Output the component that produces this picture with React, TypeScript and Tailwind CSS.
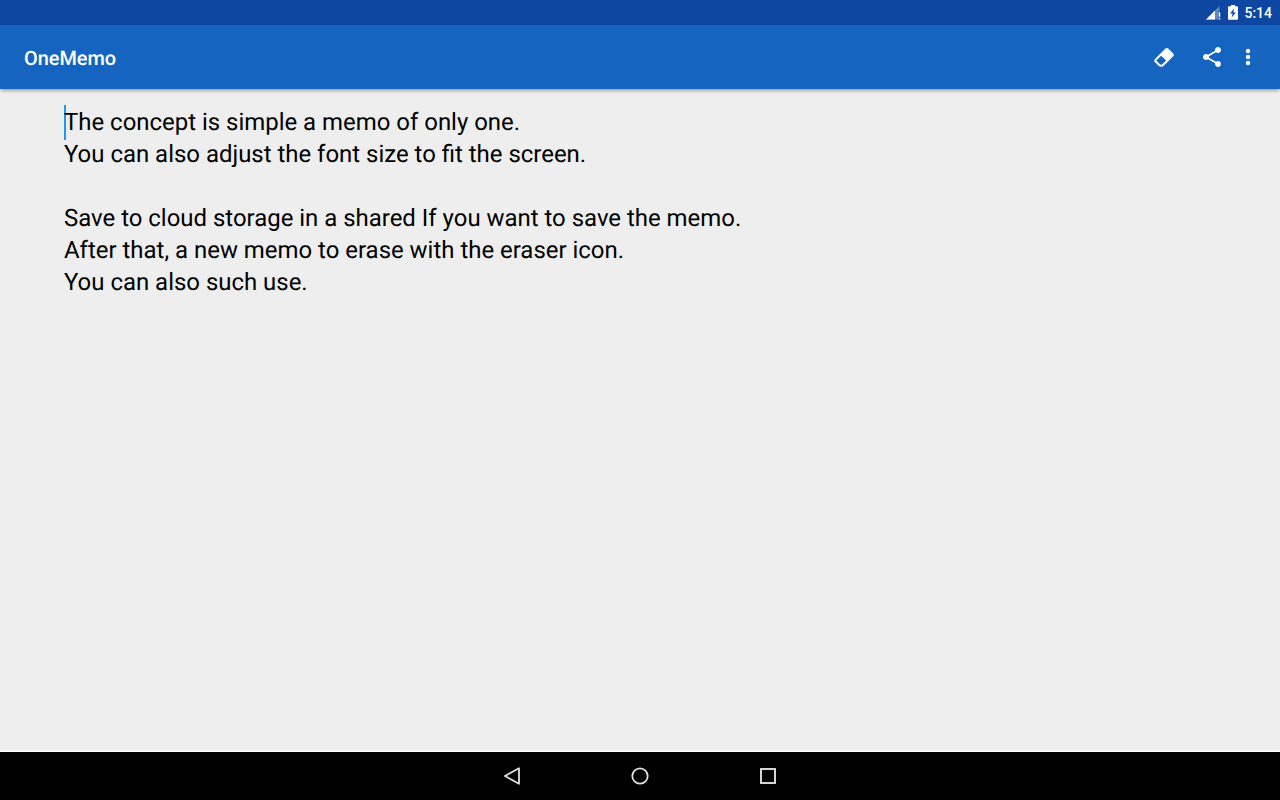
const memoLines = [
  "The concept is simple a memo of only one.",
  "You can also adjust the font size to fit the screen.",
  "",
  "Save to cloud storage in a shared If you want to save the memo.",
  "After that, a new memo to erase with the eraser icon.",
  "You can also such use.",
];

function StatusBar() {
  return (
    <div className="h-[25px] shrink-0 bg-[#0d47a1] flex items-center justify-end pr-2 text-white">
      {/* Signal */}
      <svg width="15" height="25" viewBox="0 0 15 25" className="mr-[7px]">
        <path d="M0 19.5L13.5 6v5.5H12v8H0z" fill="#fff" fillOpacity="0.35" />
        <path d="M0 19.5L9 10.5v9H0z" fill="#fff" />
        <path d="M12.6 12.2h1.6v4.6h-1.6zM12.6 17.8h1.6v1.7h-1.6z" fill="#fff" />
      </svg>

      {/* Battery */}
      <svg width="10" height="25" viewBox="0 0 10 25" className="mr-[6px]">
        <path
          fillRule="evenodd"
          fill="#fff"
          d="M3 5h4v1.3h2.2c.4 0 .8.4.8.8V19c0 .5-.4.8-.8.8H.8c-.5 0-.8-.3-.8-.8V7.1c0-.4.3-.8.8-.8H3V5zM6.2 8.5L2 13.5h2.6l-1 4L8 12.5H5.4l.8-4z"
        />
      </svg>

      <span className="text-sm leading-[25px] font-medium relative top-px [text-rendering:auto]">5:14</span>
    </div>
  );
}

function Toolbar() {
  return (
    <header className="h-16 shrink-0 bg-[#1565c0] flex items-center pl-6 pr-5 text-white shadow-[0_3px_3px_-1px_rgba(0,0,0,0.3)] relative">
      <h1 className="text-[19.9px] leading-7 font-medium flex-1 relative top-0.5">OneMemo</h1>

      <button aria-label="Erase" className="mr-6">
        <svg width="24" height="24" viewBox="0 0 24 24" fill="currentColor">
          <path d="M16.24 3.56l4.95 4.94c.78.79.78 2.05 0 2.84L12 20.53c-1.56 1.56-4.09 1.56-5.66 0L2.81 17c-.78-.79-.78-2.05 0-2.84l10.6-10.6c.79-.78 2.05-.78 2.83 0zM4.22 15.58l3.54 3.53c.78.79 2.04.79 2.83 0l3.53-3.53-4.95-4.95-4.95 4.95z" />
        </svg>
      </button>
      <button aria-label="Share" className="mr-3">
        <svg width="24" height="24" viewBox="0 0 24 24" fill="currentColor">
          <path d="M18 16.08c-.76 0-1.44.3-1.96.77L8.91 12.7c.05-.23.09-.46.09-.7s-.04-.47-.09-.7l7.05-4.11c.54.5 1.25.81 2.04.81 1.66 0 3-1.34 3-3s-1.34-3-3-3-3 1.34-3 3c0 .24.04.47.09.7L8.04 9.81C7.5 9.31 6.79 9 6 9c-1.66 0-3 1.34-3 3s1.34 3 3 3c.79 0 1.5-.31 2.04-.81l7.12 4.16c-.05.21-.08.43-.08.65 0 1.61 1.31 2.92 2.92 2.92s2.92-1.31 2.92-2.92-1.31-2.92-2.92-2.92z" />
        </svg>
      </button>
      <button aria-label="More options">
        <svg width="24" height="24" viewBox="0 0 24 24" fill="currentColor">
          <circle cx="12" cy="6" r="2.2" />
          <circle cx="12" cy="12" r="2.2" />
          <circle cx="12" cy="18" r="2.2" />
        </svg>
      </button>
    </header>
  );
}

function NavigationBar() {
  return (
    <nav className="h-12 shrink-0 bg-black flex items-center justify-center gap-[104px] text-[#e0e0e0]">
      <svg width="24" height="24" viewBox="0 0 24 24" fill="none" stroke="currentColor" strokeWidth="1.8">
        <path d="M19 4.2v15.6L4.9 12z" strokeLinejoin="round" />
      </svg>
      <svg width="24" height="24" viewBox="0 0 24 24" fill="none" stroke="currentColor" strokeWidth="1.8">
        <circle cx="12" cy="12" r="7.7" />
      </svg>
      <svg width="24" height="24" viewBox="0 0 24 24" fill="none" stroke="currentColor" strokeWidth="1.9">
        <rect x="5" y="5" width="14" height="14" />
      </svg>
    </nav>
  );
}

export default function App() {
  return (
    <div className="w-full h-screen flex flex-col overflow-hidden bg-[#eeeeee] font-['Roboto',sans-serif] [text-rendering:geometricPrecision]">
      <StatusBar />
      <Toolbar />

      <main className="flex-1 px-16 pt-[17px] text-[23.94px] leading-8 text-black border-b border-white relative">
        {/* Text cursor */}
        <span className="absolute left-16 top-4 w-[2px] h-[35px] bg-[#2196f3]" />
        {memoLines.map((line, i) => (
          <p key={i} className="h-8 whitespace-pre relative">{line}</p>
        ))}
      </main>

      <NavigationBar />
    </div>
  );
}
